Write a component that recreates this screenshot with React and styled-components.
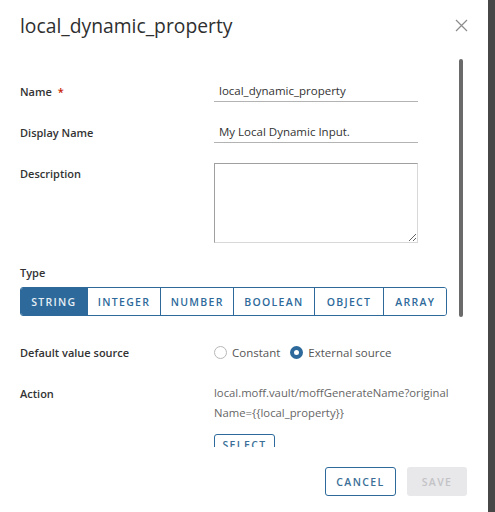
import React, { useState } from 'react';
import styled, { createGlobalStyle } from 'styled-components';

const GlobalStyle = createGlobalStyle`
    html, body {
        margin: 0;
        padding: 0;
        background: #474747;
    }
    * {
        box-sizing: border-box;
    }
`

const Screen = styled.div`
    display: flex;
    width: 495px;
    height: 512px;
    background: #474747;
`

const Dialog = styled.div`
    position: relative;
    display: flex;
    flex-direction: column;
    width: 488px;
    height: 512px;
    background: #ffffff;
    font-family: "Open Sans", "Liberation Sans", sans-serif;
    color: #333333;
`

const Header = styled.div`
    display: flex;
    align-items: center;
    justify-content: space-between;
    height: 50px;
    padding: 0 20px 0 20px;
`

const Title = styled.h3`
    margin: 0;
    font-size: 19.3px;
    font-weight: 400;
    color: #2f2f2f;
`

const Close = styled.button`
    display: flex;
    padding: 0;
    border: none;
    background: none;
    cursor: pointer;
`

const Body = styled.div`
    position: relative;
    height: 397px;
    overflow: hidden;
    padding: 30px 0 0 20px;
`

const Thumb = styled.div`
    position: absolute;
    top: 9px;
    left: 459px;
    width: 4px;
    height: 258px;
    border-radius: 2px;
    background: #6a6a6a;
`

const Row = styled.div`
    display: grid;
    grid-template-columns: 194px 204px;
    align-items: ${props => props.top ? 'start' : 'center'};
    margin-bottom: ${props => props.gap || 0}px;
`

const Label = styled.label`
    font-size: 11px;
    font-weight: 600;
    color: #333333;
    padding-top: ${props => props.pad || 0}px;
`

const Required = styled.span`
    color: #c92100;
    margin-left: 6px;
`

const TextInput = styled.input`
    height: 22px;
    width: 204px;
    padding: 0 0 0 5px;
    border: none;
    border-bottom: 1px solid #b3b3b3;
    font-family: inherit;
    font-size: 11.5px;
    color: #333333;
    outline: none;
    background: transparent;
`

const TextArea = styled.textarea`
    width: 204px;
    height: 80px;
    resize: vertical;
    border: 1px solid #d8d8d8;
    border-top-color: #a0a0a0;
    border-left-color: #a0a0a0;
    font-family: inherit;
    font-size: 11.5px;
    outline: none;
`

const Section = styled.div`
    display: flex;
    flex-direction: column;
    gap: 7px;
    margin-bottom: 29px;
`

const Segments = styled.div`
    display: flex;
    width: 427px;
    height: 29px;
    border: 1px solid #2d6a9b;
    border-radius: 3px;
    overflow: hidden;
`

const Segment = styled.button`
    width: ${props => props.w}px;
    border: none;
    border-left: ${props => props.first ? 'none' : '1px solid #2d6a9b'};
    background: ${props => props.active ? '#2d6a9b' : '#ffffff'};
    color: ${props => props.active ? '#e6eef5' : '#2d6a9b'};
    font-family: inherit;
    font-size: 10.5px;
    font-weight: 600;
    letter-spacing: 1.3px;
    padding: 0;
    cursor: pointer;
`

const Radios = styled.div`
    display: flex;
    align-items: center;
    gap: 10px;
    white-space: nowrap;
`

const RadioItem = styled.span`
    display: flex;
    align-items: center;
    gap: 5px;
    font-size: 11.5px;
    color: #555555;
`

const Dot = styled.span`
    width: 13px;
    height: 13px;
    border-radius: 50%;
    border: ${props => props.on ? '4px solid #2d6a9b' : '1px solid #b7b7b7'};
    background: #ffffff;
`

const ActionField = styled.div`
    display: flex;
    flex-direction: column;
`

const ActionText = styled.div`
    font-size: 11.3px;
    line-height: 20px;
    color: #666666;
    white-space: nowrap;
    padding-top: 1px;
`

const Outline = styled.button`
    height: ${props => props.h || 29}px;
    width: ${props => props.w}px;
    padding: 0;
    border: 1px solid #2d6a9b;
    border-radius: 3px;
    background: #ffffff;
    color: #3b6f98;
    font-family: inherit;
    font-size: 10.5px;
    font-weight: 600;
    letter-spacing: 1.4px;
    cursor: pointer;
`

const SelectButton = styled(Outline)`
    margin-top: 11px;
    align-self: flex-start;
`

const Footer = styled.div`
    display: flex;
    justify-content: flex-end;
    gap: 11px;
    padding: 20px 21px 0 0;
`

const Save = styled.button`
    width: 60px;
    height: 29px;
    border: none;
    border-radius: 3px;
    background: #e8e8ea;
    color: #c3c3c6;
    font-family: inherit;
    font-size: 10.5px;
    font-weight: 600;
    letter-spacing: 1.4px;
`

const types = [
    ['STRING', 66], ['INTEGER', 74], ['NUMBER', 73],
    ['BOOLEAN', 81], ['OBJECT', 70], ['ARRAY', 63]
];

export default function App() {
    const [type, setType] = useState('STRING');

    return (
        <Screen>
            <GlobalStyle />
            <Dialog>
                <Header>
                    <Title>local_dynamic_property</Title>
                    <Close aria-label="close">
                        <svg width="13" height="13" viewBox="0 0 13 13">
                            <path d="M1 1 L12 12 M12 1 L1 12" stroke="#8c8c8c" strokeWidth="1.2" fill="none" />
                        </svg>
                    </Close>
                </Header>

                <Body>
                    <Thumb />

                    <Row gap={19}>
                        <Label>Name<Required>*</Required></Label>
                        <TextInput defaultValue="local_dynamic_property" />
                    </Row>

                    <Row gap={20}>
                        <Label>Display Name</Label>
                        <TextInput defaultValue="My Local Dynamic Input." />
                    </Row>

                    <Row top gap={22}>
                        <Label pad={3}>Description</Label>
                        <TextArea />
                    </Row>

                    <Section>
                        <Label>Type</Label>
                        <Segments>
                            {types.map(([name, w], i) => (
                                <Segment key={name} w={w} first={i === 0}
                                    active={type === name} onClick={() => setType(name)}>
                                    {name}
                                </Segment>
                            ))}
                        </Segments>
                    </Section>

                    <Row gap={22}>
                        <Label>Default value source</Label>
                        <Radios>
                            <RadioItem><Dot />Constant</RadioItem>
                            <RadioItem><Dot on />External source</RadioItem>
                        </Radios>
                    </Row>

                    <Row top>
                        <Label pad={4}>Action</Label>
                        <ActionField>
                            <ActionText>
                                local.moff.vault/moffGenerateName?original<br />
                                Name={'{{local_property}}'}
                            </ActionText>
                            <SelectButton w={61} h={22}>SELECT</SelectButton>
                        </ActionField>
                    </Row>
                </Body>

                <Footer>
                    <Outline w={71}>CANCEL</Outline>
                    <Save disabled>SAVE</Save>
                </Footer>
            </Dialog>
        </Screen>
    );
}
